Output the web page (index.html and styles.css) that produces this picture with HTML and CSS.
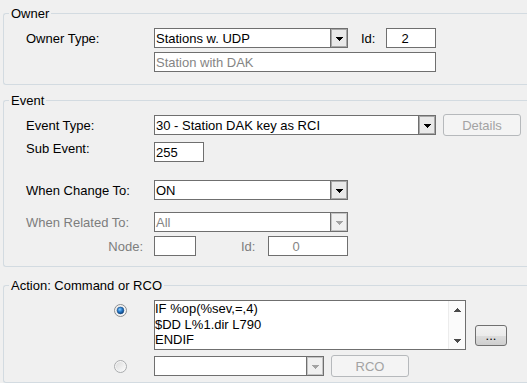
FILE: index.html
```html
<!DOCTYPE html>
<html lang="en">
<head>
  <meta charset="UTF-8" />
  <title>Event Properties</title>
  <link rel="stylesheet" href="styles.css">
</head>
<body>
  <!-- Owner -->
  <fieldset class="group owner">
    <legend>Owner</legend>
    <div class="inner">
      <div class="row">
        <span class="label">Owner Type:</span>
        <div class="combo w194">
          <span class="value">Stations w. UDP</span>
          <span class="drop"><svg width="7" height="4"><rect x="0" y="0" width="7" height="1"/><rect x="1" y="1" width="5" height="1"/><rect x="2" y="2" width="3" height="1"/><rect x="3" y="3" width="1" height="1"/></svg></span>
        </div>
        <span class="idlabel owner-id">Id:</span>
        <div class="field owner-idbox">2</div>
      </div>
      <div class="row gap4">
        <span class="label"></span>
        <div class="field w282 dim">Station with DAK</div>
      </div>
    </div>
  </fieldset>

  <!-- Event -->
  <fieldset class="group event">
    <legend>Event</legend>
    <div class="inner">
      <div class="row">
        <span class="label">Event Type:</span>
        <div class="combo w282">
          <span class="value">30 - Station DAK key as RCI</span>
          <span class="drop"><svg width="7" height="4"><rect x="0" y="0" width="7" height="1"/><rect x="1" y="1" width="5" height="1"/><rect x="2" y="2" width="3" height="1"/><rect x="3" y="3" width="1" height="1"/></svg></span>
        </div>
        <button class="btn off details">Details</button>
      </div>
      <div class="row gap6">
        <span class="label up">Sub Event:</span>
        <div class="field w50">255</div>
      </div>
      <div class="row gap18">
        <span class="label">When Change To:</span>
        <div class="combo w194">
          <span class="value">ON</span>
          <span class="drop"><svg width="7" height="4"><rect x="0" y="0" width="7" height="1"/><rect x="1" y="1" width="5" height="1"/><rect x="2" y="2" width="3" height="1"/><rect x="3" y="3" width="1" height="1"/></svg></span>
        </div>
      </div>
      <div class="row gap12">
        <span class="label muted">When Related To:</span>
        <div class="combo w194 disabled">
          <span class="value">All</span>
          <span class="drop"><svg width="7" height="4"><rect x="0" y="0" width="7" height="1"/><rect x="1" y="1" width="5" height="1"/><rect x="2" y="2" width="3" height="1"/><rect x="3" y="3" width="1" height="1"/></svg></span>
        </div>
      </div>
      <div class="row gap4">
        <span class="label muted right">Node:</span>
        <div class="field w42"></div>
        <span class="idlabel muted node-id">Id:</span>
        <div class="field dim node-idbox">0</div>
      </div>
    </div>
  </fieldset>

  <!-- Action -->
  <fieldset class="group action">
    <legend>Action: Command or RCO</legend>
    <div class="inner">
      <div class="row">
        <span class="pick">
          <svg width="13" height="13" viewBox="0 0 13 13">
            <defs>
              <linearGradient id="ring" x1="0" y1="0" x2="1" y2="1">
                <stop offset="0" stop-color="#d9d9d9"/>
                <stop offset="1" stop-color="#ffffff"/>
              </linearGradient>
              <radialGradient id="dot" cx="40%" cy="35%" r="65%">
                <stop offset="0" stop-color="#8fd0ff"/>
                <stop offset="0.5" stop-color="#2a7fd0"/>
                <stop offset="1" stop-color="#0c3f7a"/>
              </radialGradient>
            </defs>
            <circle cx="6.5" cy="6.5" r="6" fill="#f4f4f4" stroke="#8c8e90"/>
            <circle cx="6.5" cy="6.5" r="4.6" fill="url(#ring)"/>
            <circle cx="6.5" cy="6.5" r="3.4" fill="url(#dot)" stroke="#1d4f86" stroke-width="0.6"/>
          </svg>
        </span>
        <div class="memo">
          <div class="text">IF %op(%sev,=,4)
$DD L%1.dir L790
ENDIF</div>
          <div class="sbar">
            <span class="sbtn"><svg width="7" height="4"><rect x="3" y="0" width="1" height="1"/><rect x="2" y="1" width="3" height="1"/><rect x="1" y="2" width="5" height="1"/><rect x="0" y="3" width="7" height="1"/></svg></span>
            <span class="sbtn"><svg width="7" height="4"><rect x="0" y="0" width="7" height="1"/><rect x="1" y="1" width="5" height="1"/><rect x="2" y="2" width="3" height="1"/><rect x="3" y="3" width="1" height="1"/></svg></span>
          </div>
        </div>
        <button class="btn more">...</button>
      </div>
      <div class="row gap6">
        <span class="pick">
          <svg width="13" height="13" viewBox="0 0 13 13">
            <defs>
              <linearGradient id="ring2" x1="0" y1="0" x2="1" y2="1">
                <stop offset="0" stop-color="#dcdcdc"/>
                <stop offset="1" stop-color="#fbfbfb"/>
              </linearGradient>
            </defs>
            <circle cx="6.5" cy="6.5" r="6" fill="#f6f6f6" stroke="#a9abad"/>
            <circle cx="6.5" cy="6.5" r="4.6" fill="url(#ring2)"/>
          </svg>
        </span>
        <div class="combo w170 disabled">
          <span class="value"></span>
          <span class="drop"><svg width="7" height="4"><rect x="0" y="0" width="7" height="1"/><rect x="1" y="1" width="5" height="1"/><rect x="2" y="2" width="3" height="1"/><rect x="3" y="3" width="1" height="1"/></svg></span>
        </div>
        <button class="btn off rco">RCO</button>
      </div>
    </div>
  </fieldset>
</body>
</html>
```

FILE: styles.css
```css
body {
  margin: 0;
  padding: 6px 0 0 3px;
  background: #f0f0f0;
  font-family: "Liberation Sans", Arial, sans-serif;
  font-size: 13px;
  line-height: 15px;
  color: #000;
  overflow: hidden;
}

/* group boxes run off the right edge of the window */
.group {
  margin: 0;
  padding: 0;
  min-width: 0;
  border: 1px solid #d3dbe1;
  border-right: 0;
  border-radius: 3px 0 0 3px;
}
.group legend {
  margin-left: 5px;
  padding: 0 2px;
  font-size: 13px;
  line-height: 15px;
}
.event { margin-top: 8px; }
.action { margin-top: 11px; }

.inner { padding: 7px 0 12px 22px; }
.event .inner { padding-bottom: 10px; }
.action .inner { padding-bottom: 5px; }

.row {
  display: flex;
  align-items: flex-start;
}
.gap4 { margin-top: 4px; }
.gap6 { margin-top: 6px; }
.gap12 { margin-top: 12px; }
.gap18 { margin-top: 18px; }

.label {
  flex: none;
  width: 128px;
  padding-top: 3px;
  white-space: nowrap;
}
.label.up { padding-top: 0; margin-top: -1px; }
.label.right { text-align: right; padding-right: 11px; box-sizing: border-box; }
.muted { color: #7d7d7d; }

.idlabel { padding-top: 3px; }
.owner-id { margin-left: 13px; margin-right: 11px; }
.node-id { margin-left: 45px; margin-right: 13px; }

/* edit boxes */
.field, .combo {
  flex: none;
  height: 20px;
  box-sizing: border-box;
  border: 1px solid #6f6f6f;
  background: #fff;
  padding-top: 2px;
  white-space: nowrap;
}
.field { padding-left: 1px; }
.dim { color: #858585; }
.w42 { width: 42px; }
.w50 { width: 50px; }
.w170 { width: 170px; }
.w194 { width: 194px; }
.w282 { width: 282px; }
.owner-idbox { width: 50px; padding-left: 14px; }
.node-idbox { width: 80px; padding-left: 23px; }

/* drop-down lists */
.combo {
  display: flex;
  padding-top: 0;
}
.combo .value {
  flex: 1;
  padding: 2px 0 0 1px;
  overflow: hidden;
}
.combo .drop {
  width: 16px;
  flex: none;
  display: flex;
  align-items: center;
  justify-content: center;
  border-left: 1px solid #6f6f6f;
  background: #e9e9e9;
  box-shadow: inset 0 0 0 1px #a8a8a8;
}
.combo .drop svg { fill: #000; margin-top: 1px; }
.combo.disabled .value { color: #858585; }
.combo.disabled .drop { background: #f0f0f0; box-shadow: inset 0 0 0 1px #c4c4c4; }
.combo.disabled .drop svg { fill: #a3a3a3; }

/* buttons */
.btn {
  flex: none;
  height: 22px;
  margin-top: -1px;
  padding: 0;
  border: 1px solid #b6b9bc;
  border-radius: 3px;
  background: #f4f4f4;
  font-family: inherit;
  font-size: 13px;
  line-height: 15px;
  color: #a3a3a3;
}
.details { width: 78px; margin-left: 7px; }
.rco { width: 78px; margin-left: 7px; }
.more {
  width: 32px;
  height: 21px;
  margin: 25px 0 0 9px;
  border-color: #707070;
  color: #000;
  background: linear-gradient(#f2f2f2, #ebebeb 50%, #dddddd 50%, #cfcfcf);
}

/* radios */
.pick {
  flex: none;
  width: 128px;
  box-sizing: border-box;
  padding: 4px 0 0 88px;
  height: 17px;
}
.pick svg { display: block; }

/* command text */
.memo {
  flex: none;
  display: flex;
  width: 312px;
  height: 50px;
  box-sizing: border-box;
  border: 1px solid #6f6f6f;
  background: #fff;
}
.memo .text {
  flex: 1;
  white-space: pre;
  line-height: 15.5px;
}
.memo .sbar {
  width: 16px;
  flex: none;
  display: flex;
  flex-direction: column;
  justify-content: space-between;
  border-left: 1px solid #ececec;
  background: #fbfbfb;
}
.sbtn {
  height: 17px;
  display: flex;
  align-items: center;
  justify-content: center;
}
.sbtn svg { fill: #4a4a4a; }
```
